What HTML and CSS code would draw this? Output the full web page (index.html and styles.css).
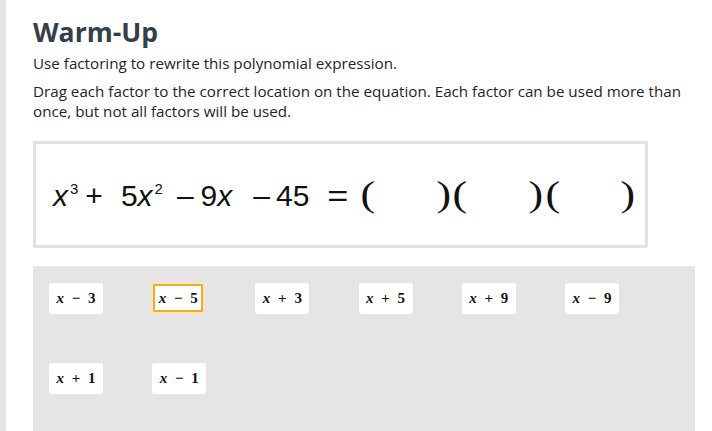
FILE: index.html
```html
<!DOCTYPE html>
<html>
<head>
<meta charset="utf-8">
<link rel="stylesheet" href="styles.css">
</head>
<body>
<div class="sidebar"></div>
<main class="main">
  <h1 class="title">Warm-Up</h1>
  <p class="lead">Use factoring to rewrite this polynomial expression.</p>
  <p class="lead">Drag each factor to the correct location on the equation. Each factor can be used more than once, but not all factors will be used.</p>
  <div class="equation-box">
    <div class="equation"><i class="t">x</i><sup class="t s1">3</sup><span class="t op1">+</span><span class="t n5">5</span><i class="t">x</i><sup class="t s2">2</sup><span class="t m1">–</span><span class="t n9">9</span><i class="t">x</i><span class="t m2">–</span><span class="t n45">45</span><span class="t eq">=</span><span class="paren p1">(</span><span class="paren p2">)</span><span class="paren p3">(</span><span class="paren p2">)</span><span class="paren p3">(</span><span class="paren p2">)</span></div>
  </div>
  <div class="bank">
    <div class="chip"><span><i>x</i> − 3</span></div>
    <div class="chip selected"><span><i>x</i> − 5</span></div>
    <div class="chip"><span><i>x</i> + 3</span></div>
    <div class="chip"><span><i>x</i> + 5</span></div>
    <div class="chip"><span><i>x</i> + 9</span></div>
    <div class="chip"><span><i>x</i> − 9</span></div>
    <div class="chip"><span><i>x</i> + 1</span></div>
    <div class="chip"><span><i>x</i> − 1</span></div>
  </div>
</main>
</body>
</html>
```
FILE: styles.css
```css
html, body {
  margin: 0;
  padding: 0;
  background: #ffffff;
  height: 100%;
  overflow: hidden;
}
body {
  display: flex;
  font-family: "Open Sans", "Noto Sans", sans-serif;
  color: #1f2328;
}
.sidebar {
  width: 6px;
  flex: none;
  background: #e4e4e4;
}
.main {
  flex: 1;
  height: 431px;
  overflow: hidden;
  padding: 14px 17px 0 27px;
}
.title {
  margin: 0;
  font-size: 26.5px;
  line-height: 36px;
  font-weight: 700;
  color: #353f4a;
}
.lead {
  margin: 3px 0 8px;
  font-size: 15.2px;
  line-height: 20px;
}
.lead + .lead { margin-top: 0; }
.equation-box {
  margin-top: 20px;
  width: 615px;
  height: 107px;
  box-sizing: border-box;
  border: 3px solid #e1e1e1;
  border-radius: 2px;
  display: flex;
  align-items: center;
  padding-left: 17px;
}
.equation {
  font-family: "Liberation Sans", Arial, sans-serif;
  font-size: 30px;
  line-height: 36px;
  color: #111;
  white-space: nowrap;
  margin-top: 2px;
}
.equation i { font-style: italic; }
.t { display: inline-block; }
.equation sup {
  font-size: 15px;
  vertical-align: 12px;
  line-height: 0;
}
.s1 { margin-left: 2px; }
.s2 { margin-left: 2px; }
.op1 { margin-left: 7px; }
.n5 { margin-left: 18px; }
.m1 { margin-left: 14px; }
.n9 { margin-left: 7px; }
.m2 { margin-left: 21px; }
.n45 { margin-left: 6px; }
.eq { margin-left: 20px; transform: scaleX(1.2); }
.paren {
  display: inline-block;
  font-family: "Liberation Serif", "DejaVu Serif", serif;
  font-size: 35px;
  color: #111;
  transform: scaleX(1.25);
}
.p1 { margin-left: 15px; }
.p2 { margin-left: 64px; }
.p3 { margin-left: 5px; }
.bank {
  margin-top: 18px;
  background: #e5e5e5;
  border-top: 1px solid #ececec;
  height: 170px;
  box-sizing: border-box;
  padding: 16px 16px;
  display: grid;
  grid-template-columns: repeat(6, 103.2px);
  grid-auto-rows: 31px;
  row-gap: 49px;
  align-content: start;
}
.chip {
  width: 54px;
  height: 31px;
  box-sizing: border-box;
  background: #ffffff;
  border-radius: 3px;
  display: flex;
  align-items: center;
  justify-content: center;
  font-family: "Liberation Serif", "DejaVu Serif", serif;
  font-weight: 700;
  font-size: 15px;
  color: #111;
  white-space: pre;
}
.chip i { font-style: italic; }
.chip span { word-spacing: 4px; }
.chip.selected {
  border: 2px solid #f0ac2e;
  box-shadow: 0 0 0 2px #f9e6bd;
  border-radius: 1px;
  width: 50px;
  height: 28px;
  margin: 1px 0 0 1px;
}
```
